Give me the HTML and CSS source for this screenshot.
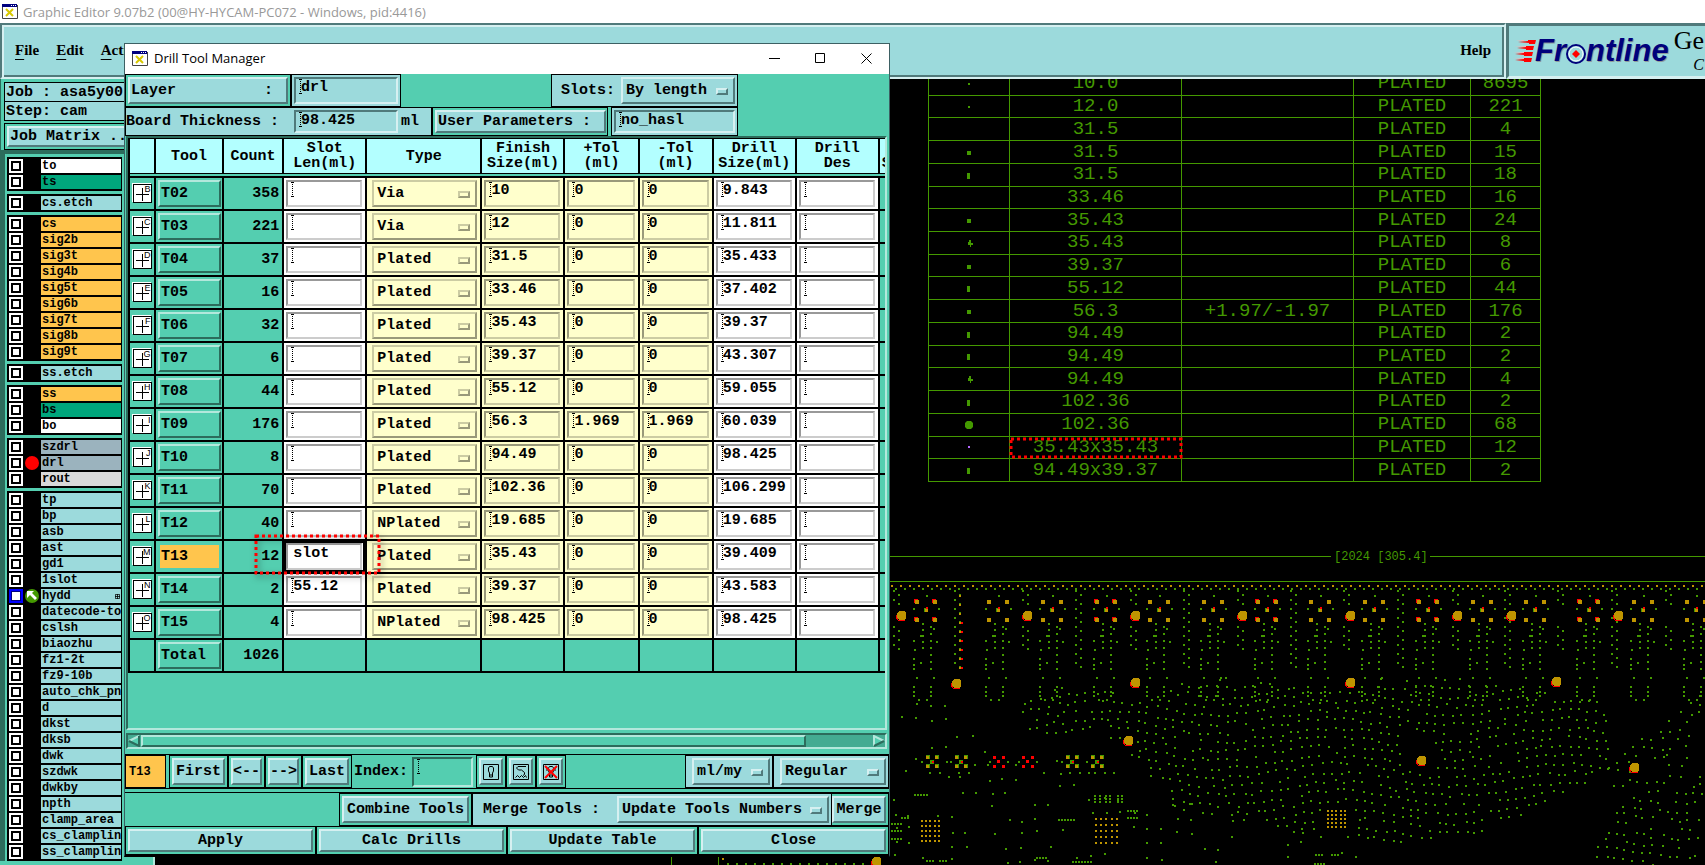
FILE: index.html
```html
<!DOCTYPE html>
<html lang="en">
<head>
<meta charset="utf-8">
<title>Graphic Editor</title>
<link rel="stylesheet" href="styles.css">
</head>
<body>
<header class="titlebar">
  <svg class="xlogo" viewBox="0 0 16 15" aria-hidden="true"><path fill="#fff" d="M0 0h16v15H0z"/><path fill="#000080" d="M0 0h15v3H0z"/><path fill="#fff" d="M9 1h1v1H9zM11 1h1v1h-1zM13 1h1v1h-1z"/><path fill="none" stroke="#444" d="M.5 3v11.500h15V1"/><path stroke="#d8c800" stroke-width="2" d="M4 5l7 7M11 5l-7 7"/></svg>
  <span class="titlebar-text">Graphic Editor 9.07b2 (00@HY-HYCAM-PC072 - Windows, pid:4416)</span>
</header>
<div class="menurow">
  <nav class="menubar">
    <a href="#file"><u>F</u>ile</a><a href="#edit"><u>E</u>dit</a><a href="#actions"><u>A</u>ctions</a><a class="menu-help" href="#help">Help</a>
  </nav>
  <div class="brand">
    <svg class="darts" viewBox="0 0 24 24" aria-hidden="true"><g fill="#ffb0b0"><path d="M3 2h8v-1zM1 8h12v-1zM0 14h12v-1zM0 20h12v-1z"/></g><g fill="#f00"><path d="M5 3l10-1v-1h8l-1 4h-6v-1zM4 9l9-1v-1h8l-1 4h-7v-1zM2 15l9-1v-1h9l-1 4h-8v-1zM2 21l9-1v-1h8l-1 4h-7v-1z"/></g></svg>
    <span class="wordmark">Fr<svg class="target" viewBox="0 0 20 20" role="img" aria-label="o"><circle cx="10" cy="10" r="9" fill="#9cdadc" stroke="#00007c" stroke-width="2"/><circle cx="10" cy="10" r="7" fill="none" stroke="#fff"/><path fill="#f00" d="M10 6l4 4-4 4-4-4z"/></svg>ntline</span>
    <span class="product">Ge<i>C</i></span>
  </div>
</div>
<main class="workspace">
  <aside class="side">
    <div class="jobinfo">
      <div class="jobline">Job : asa5y00</div>
      <div class="jobline">Step: cam</div>
      <div class="jobbtn"><button class="btn">Job Matrix ...</button></div>
    </div>
    <div class="layers" id="layers"></div>
  </aside>
  <section class="canvas">
    <svg class="scene" id="scene" aria-hidden="true"></svg>
    <table class="legend"><colgroup><col class="l1"><col class="l2"><col class="l2"><col class="l3"><col class="l4"></colgroup><tbody id="legend"></tbody></table>
  </section>
</main>

<section class="dialog" aria-label="Drill Tool Manager">
  <header class="dlg-title">
    <svg class="xlogo" viewBox="0 0 16 15" aria-hidden="true"><path fill="#fff" d="M0 0h16v15H0z"/><path fill="#000080" d="M0 0h15v3H0z"/><path fill="#fff" d="M9 1h1v1H9zM11 1h1v1h-1zM13 1h1v1h-1z"/><path fill="none" stroke="#444" d="M.5 3v11.500h15V1"/><path stroke="#d8c800" stroke-width="2" d="M4 5l7 7M11 5l-7 7"/></svg>
    <span class="dlg-name">Drill Tool Manager</span>
    <button class="wbtn" aria-label="Minimize"><svg viewBox="0 0 11 11"><path d="M0 5.500h11"/></svg></button>
    <button class="wbtn" aria-label="Maximize"><svg viewBox="0 0 11 11"><path d="M.5.5h9v9h-9z"/></svg></button>
    <button class="wbtn" aria-label="Close window"><svg viewBox="0 0 11 11"><path d="M.5.5l10 10M10.500.5l-10 10"/></svg></button>
  </header>
  <div class="params">
    <div class="prow prow-a">
      <div class="frame w-layer"><button class="btn btn-left"><span>Layer</span><span>:</span></button></div>
      <div class="frame blue w-layerval"><label class="field"><input aria-label="Layer" value="drl"></label></div>
      <div class="spacer"></div>
      <div class="frame blue slots"><label for="slots">Slots:</label><span class="opt"><select id="slots"><option>By length</option></select></span></div>
    </div>
    <div class="prow prow-b">
      <div class="frame blue w-board"><label for="board">Board Thickness :</label><span class="field"><input id="board" value="98.425"></span><span>ml</span></div>
      <div class="frame w-user"><button class="btn btn-left">User Parameters :</button></div>
      <div class="spacer"></div>
      <div class="frame blue w-userval"><label class="field"><input aria-label="User Parameters" value="no_hasl"></label></div>
    </div>
  </div>
  <div class="tableview">
    <table class="tools">
      <colgroup><col class="c-sym"><col class="c-tool"><col class="c-count"><col class="c-size"><col class="c-type"><col class="c-size"><col class="c-tol"><col class="c-tol"><col class="c-size"><col class="c-size"><col class="c-size"></colgroup>
      <thead>
        <tr><th></th><th>Tool</th><th>Count</th><th>Slot<br>Len(ml)</th><th>Type</th><th>Finish<br>Size(ml)</th><th>+Tol<br>(ml)</th><th>-Tol<br>(ml)</th><th>Drill<br>Size(ml)</th><th>Drill<br>Des</th><th class="cut"><br>S</th></tr>
        <tr class="gap"><td colspan="11"></td></tr>
      </thead>
      <tbody id="tools"></tbody>
    </table>
  </div>
  <div class="scroll" aria-hidden="true">
    <svg viewBox="0 0 12 12"><path fill="#54ceb0" d="M1 6l10-5v10z"/><path fill="none" stroke="#b3e8dc" stroke-width="2" d="M11 1L1 6"/><path fill="none" stroke="#2c6c5c" stroke-width="2" d="M1 6l10 5V1"/></svg>
    <div class="track"><div class="thumb"></div></div>
    <svg viewBox="0 0 12 12"><path fill="#54ceb0" d="M11 6L1 1v10z"/><path fill="none" stroke="#b3e8dc" stroke-width="2" d="M1 11V1l10 5"/><path fill="none" stroke="#2c6c5c" stroke-width="2" d="M1 11l10-5"/></svg>
  </div>
  <div class="navrow">
    <div class="current">T13</div>
    <div class="frame"><button class="btn">First</button></div>
    <div class="frame"><button class="btn arrow">&lt;--</button></div>
    <div class="frame"><button class="btn arrow">--&gt;</button></div>
    <div class="frame"><button class="btn">Last</button></div>
    <label class="index" for="index">Index:</label><span class="field green"><input id="index"></span>
    <div class="frame"><button class="btn ico" aria-label="Highlight"><svg viewBox="0 0 16 16"><path d="M.5.5h15v15H.5z"/><path d="M6.500 11V9L5.500 7V4l1-1.500h3l1 1.500v3l-1 2v2zM6.500 11v2h3v-2"/></svg></button></div>
    <div class="frame"><button class="btn ico" aria-label="Select"><svg viewBox="0 0 16 16"><path d="M.5.5h15v15H.5z"/><path d="M13 2.500H5L3.500 4l2 2h3l3 2.500v2L10 11.500M2.500 13.500l2-2 2 2 2-2 2 2 2-2 1 2"/></svg></button></div>
    <div class="frame"><button class="btn ico" aria-label="Clear highlight"><svg viewBox="0 0 16 16"><path d="M.5.5h15v15H.5z"/><path d="M6.500 11V9L5.500 7V4l1-1.500h3l1 1.500v3l-1 2v2zM6.500 11v2h3v-2M4 4v3M12 4v3"/><path stroke="#f00" stroke-width="2" d="M2 2l12 12M14 2L2 14"/></svg></button></div>
    <div class="spacer"></div>
    <div class="frame blue unit"><span class="opt"><select aria-label="Units"><option>ml/my</option></select></span></div>
    <div class="frame blue mode"><span class="opt"><select aria-label="Mode"><option>Regular</option></select></span></div>
  </div>
  <div class="mergerow">
    <div class="spacer"></div>
    <div class="frame"><button class="btn">Combine Tools</button></div>
    <div class="frame blue merge"><label for="merge">Merge Tools :</label><span class="opt"><select id="merge"><option>Update Tools Numbers</option></select></span></div>
    <div class="frame bare"><button class="btn">Merge</button></div>
  </div>
  <div class="actions">
    <div class="frame"><button class="btn">Apply</button></div><div class="frame"><button class="btn">Calc Drills</button></div><div class="frame"><button class="btn">Update Table</button></div><div class="frame"><button class="btn">Close</button></div>
  </div>
</section>
<script src="app.js"></script>
</body>
</html>
```

FILE: styles.css
```css
:root {
  --teal: #54ceb0;
  --teal-hi: #b3e8dc;
  --teal-lo: #2c6c5c;
  --blue: #9cdadc;
  --blue-hi: #d6f0f1;
  --blue-lo: #507a7b;
  --yellow: #ffffcc;
  --orange: #ffc54d;
  --trace: #449900;
  --mono: "Liberation Mono", monospace;
}
*, *::before, *::after { box-sizing: border-box; }
body {
  margin: 0;
  height: 100vh;
  overflow: hidden;
  display: flex;
  flex-direction: column;
  background: #000;
  color: #000;
  font: bold 15px/15px var(--mono);
}
button, input, select { font: inherit; color: inherit; }
.spacer { flex: 1; }
.xlogo { width: 16px; height: 15px; flex: none; }

.titlebar {
  display: flex;
  align-items: center;
  gap: 5px;
  height: 23px;
  padding-left: 2px;
  background: #fff;
  color: #999;
  font: 13px/20px "Open Sans", sans-serif;
}
.menurow { display: flex; height: 56px; background: var(--teal); }
.menubar {
  flex: 1;
  display: flex;
  align-items: center;
  gap: 17px;
  padding: 0 13px 2px 13px;
  background: var(--blue);
  border: 2px solid var(--blue-lo);
  border-color: var(--blue-lo) var(--blue-hi) var(--blue-hi) var(--blue-lo);
  box-shadow: inset 2px 2px var(--blue-hi), inset -2px -2px var(--blue-lo);
  font: bold 15px/20px "Liberation Serif", serif;
}
.menubar a { color: #000; text-decoration: none; }
.menubar u { text-underline-offset: 4px; }
.menu-help { margin-left: auto; }
.brand {
  width: 199px;
  display: flex;
  align-items: center;
  overflow: hidden;
  padding-left: 4px;
  background: var(--blue);
  border-left: 3px solid var(--blue-lo);
  border-top: 3px solid var(--blue-lo);
  border-bottom: 3px solid var(--blue-hi);
}
.darts { width: 24px; height: 24px; flex: none; }
.wordmark {
  display: flex;
  align-items: center;
  flex: none;
  margin-left: -2px;
  color: #00007c;
  font: italic bold 31px/40px "Liberation Sans", Arial, sans-serif;
  text-shadow: 1px 1px #8f9a9a;
}
.target { width: 20px; height: 20px; margin-top: 6px; }
.product {
  display: flex;
  flex-direction: column;
  margin-left: 5px;
  font: 26px/28px "Liberation Serif", serif;
}
.product i { font-size: 16px; line-height: 20px; align-self: flex-end; }

.workspace { flex: 1; display: flex; min-height: 0; }
.side {
  width: 155px;
  flex: none;
  overflow: hidden;
  background: var(--teal);
  border-right: 2px solid var(--teal-hi);
}
.jobinfo { padding: 3px 0 0 3px; border-left: 1px solid var(--teal-lo); }
.jobline {
  height: 20px;
  padding: 2px 1px;
  border: 1px solid #000;
  background: var(--blue);
  white-space: nowrap;
}
.jobline + .jobline { border-top: 0; height: 19px; }
.jobbtn { margin-top: 2px; padding: 2px; height: 27px; border: 1px solid #000; display: flex; }
.jobbtn .btn { flex: 1; text-align: left; padding: 0 1px; }
.layers {
  padding: 3px 31px 0 2px;
  border-left: 5px solid var(--teal-lo);
  border-top: 4px solid var(--teal-lo);
}
.group { background: #000; padding: 2px 1px 0 2px; margin-bottom: 3px; }
.lrow { display: flex; align-items: center; height: 16px; padding-bottom: 2px; }
.lrow input {
  appearance: none;
  flex: none;
  width: 14px;
  height: 14px;
  margin: 0;
  background: #fff;
  border: 2px solid #fff;
  box-shadow: inset 0 0 0 2px #000;
}
.lrow input:checked { border-color: #00f; box-shadow: inset 0 0 0 1px #000080; }
.mark { width: 18px; flex: none; display: flex; justify-content: center; }
.mark svg { width: 14px; height: 14px; }
.lname {
  flex: 1;
  height: 14px;
  padding-left: 1px;
  background: var(--blue);
  overflow: hidden;
  white-space: nowrap;
  font-size: 12px;
  line-height: 14px;
  position: relative;
}
.lname.white { background: #fff; }
.lname.green { background: #00a67c; }
.lname.orange { background: var(--orange); }
.lname.slate { background: #9bb3be; }
.lname.grey { background: #d9d9d9; }
.lname svg { position: absolute; right: 1px; top: 5px; width: 5px; height: 5px; }

.canvas { flex: 1; position: relative; overflow: hidden; background: #000; }
.scene { position: absolute; inset: 0; width: 100%; height: 100%; }
.legend {
  position: absolute;
  left: 773px;
  top: -7px;
  width: 612px;
  height: 410px;
  table-layout: fixed;
  border-collapse: collapse;
  color: var(--trace);
  font-weight: normal;
  font-size: 19px;
  text-align: center;
}
.legend td { border: 1px solid var(--trace); padding: 0; position: relative; }
.legend svg { display: block; margin: 0 auto; width: 8px; height: 8px; }
.l1 { width: 81px; } .l2 { width: 172px; } .l3 { width: 117px; } .l4 { width: 70px; }
.note { position: absolute; overflow: visible; filter: drop-shadow(2px 3px 3px #0008); z-index: 2; }
.note rect { fill: none; stroke: #f00; stroke-width: 3; stroke-dasharray: 3 3; width: 100%; height: 100%; }
.legend .note { left: 1px; top: 2px; width: 170px; height: 18px; margin: 0; }
.tools .note { left: -28px; top: -5px; width: 123px; height: 37px; }

.dialog {
  position: absolute;
  left: 124px;
  top: 43px;
  width: 766px;
  background: var(--teal);
  border: 1px solid #3d6063;
  border-bottom: 2px solid #000;
}
.dlg-title {
  display: flex;
  align-items: center;
  height: 30px;
  padding: 0 17px 2px 7px;
  background: #fff;
  font: 13px/20px "Open Sans", sans-serif;
}
.dlg-name { flex: 1; padding-left: 6px; }
.wbtn { width: 11px; height: 11px; margin-left: 35px; padding: 0; border: 0; background: none; display: flex; }
.wbtn svg { width: 11px; height: 11px; fill: none; stroke: #000; }

.frame { display: flex; border: 1px solid #000; padding: 2px; background: var(--teal); white-space: nowrap; }
.frame.blue { background: var(--blue); align-items: center; }
.btn, .opt select {
  background: var(--blue);
  border: 2px solid;
  border-color: var(--blue-hi) var(--blue-lo) var(--blue-lo) var(--blue-hi);
  border-radius: 0;
  padding: 0 2px;
}
.btn { flex: 1; white-space: nowrap; }
.btn.arrow { padding: 0; }
.btn-left { display: flex; align-items: center; justify-content: space-between; padding: 0 13px 0 1px; }
.opt { position: relative; display: flex; align-self: stretch; flex: 1; }
.opt select { appearance: none; flex: 1; width: 100%; padding: 0 20px 0 3px; margin: 0; outline: 0; }
.opt::after {
  content: "";
  position: absolute;
  right: 7px;
  top: calc(50% - 3px);
  width: 12px;
  height: 7px;
  border: 2px solid;
  border-color: var(--blue-hi) var(--blue-lo) var(--blue-lo) var(--blue-hi);
  pointer-events: none;
}
.field {
  display: flex;
  align-self: stretch;
  flex: 1;
  min-width: 0;
  padding-left: 3px;
  border: 2px solid;
  border-color: var(--blue-lo) var(--blue-hi) var(--blue-hi) var(--blue-lo);
}
.field::before {
  content: "";
  flex: none;
  width: 3px;
  height: 15px;
  margin-right: -1px;
  background:
    repeating-linear-gradient(#000 0 1px, transparent 1px 2px) 1px 0 / 1px 15px no-repeat,
    linear-gradient(#000, #000) 0 0 / 3px 1px no-repeat,
    linear-gradient(#000, #000) 0 14px / 3px 1px no-repeat;
}
.field input { width: 100%; min-width: 0; height: 16px; padding: 0; border: 0; outline: 0; background: none; }

.prow { display: flex; margin-right: 151px; }
.prow-a { height: 33px; }
.prow-b { height: 29px; }
.prow-b .spacer { max-width: 3px; }
.w-layer { width: 166px; }
.w-layerval { width: 110px; }
.slots { width: 187px; gap: 6px; padding-left: 9px; }
.w-board { width: 307px; gap: 3px; padding-right: 12px; padding-left: 0; }
.w-board .field { margin-left: 12px; }
.w-user { width: 176px; }
.w-userval { flex: 1; }

.tableview {
  height: 594px;
  margin: 0 2px 0 1px;
  overflow: hidden;
  border: 2px solid;
  border-color: var(--teal-lo) var(--teal-hi) var(--teal-hi) var(--teal-lo);
}
.tools { table-layout: fixed; width: 835px; border-collapse: separate; border-spacing: 0; border-left: 2px solid #000; }
.c-sym { width: 26px; } .c-tool { width: 68px; } .c-count { width: 60px; }
.c-size { width: 83px; } .c-type { width: 115px; } .c-tol { width: 74px; }
.tools th { height: 36px; padding: 0; background: #b3ffff; border: solid #000; border-width: 1px 2px 1px 0; }
.tools .cut { text-align: left; padding-left: 2px; }
.tools .gap td { height: 4px; padding: 0; border-bottom: 2px solid #000; background: var(--teal); }
.tools tbody td { height: 33px; padding: 2px; border: solid #000; border-width: 0 2px 2px 0; position: relative; }
.tools .count { text-align: right; padding-right: 3px; }
.tools .white { background: #fff; }
.tools .yellow { background: var(--yellow); }
.tools .btn { display: block; width: 63px; height: 27px; text-align: left; padding: 0 1px; background: var(--teal); border-color: var(--teal-hi) var(--teal-lo) var(--teal-lo) var(--teal-hi); }
.tools .btn.on { background: var(--orange); border-color: var(--teal); }
.tools .field { height: 27px; margin-right: 1px; border-color: #999 #ccc #ccc #999; }
.tools .yellow .field { border-color: #99997a #cccca3 #cccca3 #99997a; }
.tools .opt { height: 27px; margin: 0 1px 0 3px; }
.tools .opt select { background: var(--yellow); }
.tools .opt select, .tools .opt::after { border-color: #cccca3 #99997a #99997a #cccca3; }
.tools .picked { box-shadow: inset 0 0 0 2px #000; }
.tools .picked .field::before { visibility: hidden; }
.sym { display: block; width: 19px; height: 19px; margin: 0 auto; position: relative; background: #fff; border: 1px solid #000; box-shadow: -1px -1px #fff; font-size: 9px; line-height: 8px; text-align: right; font-family: "Liberation Sans", sans-serif; font-weight: normal; }
.sym::before { content: ""; position: absolute; left: 2px; top: 3px; width: 13px; height: 13px; background: linear-gradient(#000, #000) 50% 0 / 1px 100% no-repeat, linear-gradient(#000, #000) 0 50% / 100% 1px no-repeat; }

.scroll { display: flex; margin: 3px 2px 0 1px; height: 16px; background: #44ab92; border: 2px solid; border-color: var(--teal-lo) var(--teal-hi) var(--teal-hi) var(--teal-lo); }
.scroll svg { width: 12px; height: 12px; flex: none; }
.track { flex: 1; margin: 0 1px; }
.thumb { width: 91%; height: 12px; background: var(--teal); border: 2px solid; border-color: var(--teal-hi) var(--teal-lo) var(--teal-lo) var(--teal-hi); }

.navrow { display: flex; margin-top: 5px; height: 35px; border: solid #000; border-width: 1px 0; }
.current { width: 41px; margin-right: 3px; padding: 9px 3px; background: var(--orange); border: 1px solid #000; font-size: 12px; }
.index { padding: 9px 4px 0 2px; }
.field.green { flex: none; width: 61px; margin: 2px 3px 1px 0; border-color: var(--teal-lo) var(--teal-hi) var(--teal-hi) var(--teal-lo); }
.ico { padding: 0; width: 24px; display: flex; align-items: center; justify-content: center; }
.ico svg { width: 16px; height: 16px; fill: none; stroke: #000; }
.unit { width: 88px; padding-left: 6px; }
.mode { width: 116px; padding-left: 6px; }

.mergerow { display: flex; margin-top: 3px; height: 34px; border-top: 1px solid #000; }
.mergerow .btn { padding: 0 3px; }
.merge { width: 360px; padding-left: 10px; gap: 17px; }
.mergerow .bare { border-left: 0; padding-left: 0; }
.mergerow .bare .btn { padding: 0 1px; min-width: 54px; }
.actions { display: grid; grid-template-columns: repeat(4, 1fr); height: 29px; }
```

FILE: app.js
```js
const el = id => document.getElementById(id);

/* Layer list */
const layerGroups = [
  ['white:to', 'green:ts'],
  [':cs.etch'],
  ['orange:cs', 'orange:sig2b', 'orange:sig3t', 'orange:sig4b', 'orange:sig5t', 'orange:sig6b', 'orange:sig7t', 'orange:sig8b', 'orange:sig9t'],
  [':ss.etch'],
  ['orange:ss', 'green:bs', 'white:bo'],
  ['slate:szdrl', 'slate:drl', 'grey:rout'],
  [':tp', ':bp', ':asb', ':ast', ':gd1', ':1slot', ':hydd', ':datecode-to', ':cslsh', ':biaozhu', ':fz1-2t', ':fz9-10b', ':auto_chk_pnl', ':d', ':dkst', ':dksb', ':dwk', ':szdwk', ':dwkby', ':npth', ':clamp_area', ':cs_clampline', ':ss_clampline']
];
const marks = {
  drl: '<svg viewBox="0 0 14 14"><circle cx="7" cy="7" r="7" fill="#f00"/></svg>',
  hydd: '<svg viewBox="0 0 14 14"><circle cx="7" cy="7" r="7" fill="#449900"/><path fill="#fff" d="M2 2h7L7 4l5 5-2 2-5-5-3 3z"/></svg>'
};
el('layers').innerHTML = layerGroups.map(g => '<div class="group">' + g.map(s => {
  const [c, n] = s.split(':');
  const grid = n === 'hydd' ? '<svg viewBox="0 0 5 5"><path fill="none" stroke="#000" stroke-width=".8" d="M.4.400h4.200v4.200H.4zM2.500 0v5M0 2.500h5"/></svg>' : '';
  return `<div class="lrow"><input type="checkbox" aria-label="${n}"${n === 'hydd' ? ' checked' : ''}><span class="mark">${marks[n] || ''}</span><span class="lname ${c}">${n}${grid}</span></div>`;
}).join('') + '</div>').join('');

/* Drill tools: letter, tool, count, slot, type, finish, +tol, -tol, drill */
const tools = `B T02 358 - Via 10 0 0 9.843
C T03 221 - Via 12 0 0 11.811
D T04 37 - Plated 31.5 0 0 35.433
E T05 16 - Plated 33.46 0 0 37.402
F T06 32 - Plated 35.43 0 0 39.37
G T07 6 - Plated 39.37 0 0 43.307
H T08 44 - Plated 55.12 0 0 59.055
I T09 176 - Plated 56.3 1.969 1.969 60.039
J T10 8 - Plated 94.49 0 0 98.425
K T11 70 - Plated 102.36 0 0 106.299
L T12 40 - NPlated 19.685 0 0 19.685
M T13 12 slot Plated 35.43 0 0 39.409
N T14 2 55.12 Plated 39.37 0 0 43.583
O T15 4 - NPlated 98.425 0 0 98.425`.split('\n').map(r => r.split(' '));
const note = '<svg class="note"><rect/></svg>';
const field = (cls, name, v, extra = '') =>
  `<td class="${cls}"><label class="field"><input aria-label="${name}" value="${v}"></label>${extra}</td>`;
el('tools').innerHTML = tools.map(([l, t, c, s, ty, f, p, m, d]) => {
  const on = t === 'T13';
  return `<tr><td><span class="sym">${l}</span></td><td><button class="btn${on ? ' on' : ''}">${t}</button></td><td class="count">${c}</td>` +
    field('white' + (on ? ' picked' : ''), t + ' slot length', s === '-' ? '' : s, on ? note : '') +
    `<td class="yellow"><span class="opt"><select aria-label="${t} type"><option>${ty}</option></select></span></td>` +
    field('yellow', t + ' finish size', f) + field('yellow', t + ' plus tolerance', p) + field('yellow', t + ' minus tolerance', m) +
    field('white', t + ' drill size', d) + field('white', t + ' drill des', '') + '<td></td></tr>';
}).join('') + '<tr><td></td><td><button class="btn">Total</button></td><td class="count">1026</td>' + '<td></td>'.repeat(8) + '</tr>';

/* Drill legend */
const dot = { s: 'M3 3h2v2H3z', a: 'M2 3h4v4H2z', b: 'M2 2h3v6H2z', c: 'M4 1h2v3h2v2H6v3H5V6H3V3h1z', o: 'M2 0h4l2 2v4L6 8H2L0 6V2z' };
const legend = `s 10.0 - 8695
s 12.0 - 221
- 31.5 - 4
a 31.5 - 15
b 31.5 - 18
- 33.46 - 16
a 35.43 - 24
c 35.43 - 8
a 39.37 - 6
b 55.12 - 44
a 56.3 +1.97/-1.97 176
b 94.49 - 2
b 94.49 - 2
c 94.49 - 4
b 102.36 - 2
o 102.36 - 68
v 35.43x35.43 - 12
b 94.49x39.37 - 2`.split('\n').map(r => r.split(' '));
el('legend').innerHTML = legend.map(([k, d, t, n]) => {
  const icon = k === '-' ? '' : `<svg viewBox="0 0 8 8"><path fill="${k === 'v' ? '#b366ff' : '#449900'}" d="${dot[k] || dot.s}"/></svg>`;
  return `<tr><td>${icon}</td><td>${d}${k === 'v' ? note : ''}</td><td>${t === '-' ? '' : t}</td><td>PLATED</td><td>${n}</td></tr>`;
}).join('');

/* Board artwork, drawn in window coordinates */
let seed = 7;
const rnd = () => (seed = (seed * 16807) % 2147483647) / 2147483647;
const paths = { g: '', y: '', r: '' };
const px = (k, x, y, s = 2) => { x = Math.round(x); y = Math.round(y); paths[k] += `M${x} ${y}h${s}v${s}h-${s}z`; };
const discAt = (x, y) => { paths.r += `M${x - 5} ${y - 1}h2v5h7v1h-7l-2-2z`; paths.y += `M${x - 2} ${y - 5}h5l2 2v5l-2 2h-5l-2-2v-5z`; };

for (let x = 891; x < 1705; x += 9) { px('y', x, 585); px('g', x + 4, 588); }

for (const [i, c] of [926, 998, 1052, 1106, 1159, 1213, 1267, 1320, 1374, 1428, 1482, 1535, 1589, 1643, 1696].entries()) {
  for (const dx of [-9, 9]) for (const dy of [-9, 9]) {
    if (i % 3 === 0) px('r', c + dx - 3, 610 + dy - 2, 4);
    px('y', c + dx - 2, 610 + dy - 1, 4);
  }
  px('g', c - 2, 608, 4); px('y', c - 1, 609, 3); px('r', c, 607);
  px('g', c - 13, 608); px('g', c + 12, 608); px('g', c, 595);
  for (let y = 623; y < 652; y += 6) px('g', c - 4, y);
  for (let y = 626; y < 670; y += 7) px('g', c + 4, y);
  for (const y of [686, 691, 695]) { px('g', c + 4, y); px('g', c - 13, y); }
  for (const y of [640, 649, 658, 664, 668]) px('g', c - 13 + (y % 2), y);
  px('g', c - 10, 677); px('g', c + 7, 677); px('g', c + 7, 628); px('g', c - 6, 635); px('g', c - 6, 662); px('g', c + 10, 641); px('g', c - 8, 699); px('g', c, 699);
}
for (const [i, x] of [893, 954, 1022, 1075, 1130, 1183, 1237, 1290, 1343, 1397, 1452, 1504, 1557, 1611, 1665].entries()) {
  for (let y = 590; y < (i % 2 ? 668 : 650); y += 9) {
    if (y > 605 && y < 622 && i % 2 === 0) continue;
    px('g', x, y); px('g', x + 5, y + 4);
  }
}
for (let y = 595; y < 668; y += 9) { px('y', 959, y); if (y > 620) px('r', 961, y); }

const inside = (x, y, p) => {
  let hit = false;
  for (let i = 0, j = p.length - 1; i < p.length; j = i++)
    if ((p[i][1] > y) !== (p[j][1] > y) && x < (p[j][0] - p[i][0]) * (y - p[i][1]) / (p[j][1] - p[i][1]) + p[i][0]) hit = !hit;
  return hit;
};
const fill = (poly, step, bend, keep = 1, hole = []) => {
  for (let x = 889; x < 1705; x += step) for (let y = 660; y < 865; y += step) {
    const qx = x + Math.sin(y / 31) * bend + rnd() * 4, qy = y + Math.sin(x / 37) * bend + rnd() * 4;
    if (inside(qx, qy, poly) && !hole.some(([hx, hy, r]) => Math.hypot(qx - hx, qy - hy) < r) && rnd() < keep) px('g', qx, qy);
  }
};
fill([[1017, 700], [1065, 684], [1110, 690], [1150, 700], [1172, 682], [1228, 676], [1300, 688], [1340, 682], [1375, 678], [1460, 678], [1510, 684], [1600, 700], [1610, 735], [1612, 768], [1560, 795], [1530, 812], [1480, 833], [1420, 841], [1350, 841], [1295, 835], [1240, 815], [1180, 812], [1150, 780], [1125, 748], [1100, 734], [1020, 734]], 9, 7, .93, [[1421, 755, 18], [1408, 735, 10], [1350, 683, 8], [1336, 820, 18], [1128, 741, 9]]);
fill([[1590, 865], [1600, 830], [1640, 780], [1700, 775], [1705, 865]], 9, 5, .8);
fill([[1600, 770], [1680, 705], [1705, 690], [1705, 712], [1650, 770], [1615, 800]], 9, 5, .8);
fill([[1655, 760], [1705, 720], [1705, 790], [1680, 790]], 10, 4, .6);
fill([[891, 700], [960, 700], [1000, 745], [1130, 770], [1180, 800], [1340, 835], [1380, 865], [891, 865]], 14, 4, .42, [[930, 830, 16], [1106, 830, 18]]);
for (const [x, y, n] of [[891, 823, 4], [891, 830, 4], [891, 838, 4], [914, 794, 5], [901, 817, 3], [1058, 819, 6], [926, 860, 3], [939, 860, 3], [1127, 810, 4], [1127, 817, 4], [1072, 861, 7], [1036, 857, 4], [1315, 854, 3], [1331, 854, 3], [1314, 863, 4]])
  for (let i = 0; i < n; i++) px('g', x + i * 3, y);
for (const x of [1094, 1099, 1105, 1109, 1117, 1121]) for (let y = 795; y < 804; y += 3) px('g', x, y);
for (const [ax, ay, dx, dy] of [[921, 820, 4, 5], [1095, 818, 5, 6], [1327, 810, 4, 4]])
  for (let i = 0; i < 5; i++) for (let j = 0; j < 5; j++) px('y', ax + i * dx + (i > 2 ? 1 : 0), ay + j * dy);
for (const x of [932, 961, 1072, 1097]) {
  for (const dx of [-5, 4]) for (const dy of [-5, 4]) { px('g', x + dx - 1, 761 + dy - 1, 4); px('y', x + dx - 1, 761 + dy, 3); }
  px('g', x - 2, 760, 4); px('r', x, 761); px('g', x - 11, 761); px('g', x - 3, 772); px('g', x + 7, 772);
}
for (const x of [998, 1027]) {
  for (const dx of [-5, 4]) for (const dy of [-5, 4]) px('r', x + dx, 761 + dy, 3);
  px('r', x - 1, 760, 3); px('g', x - 9, 761); px('g', x + 9, 761);
}
for (const [x, y] of [[901, 616], [1027, 616], [1135, 616], [1242, 616], [1350, 616], [1457, 616], [1511, 616], [1618, 616], [956, 684], [1135, 683], [1128, 741], [1350, 683], [1556, 682], [1421, 761], [1634, 768], [876, 862]]) discAt(x, y);
for (let x = 727; x < 865; x += 9) px('g', x, 863);
px('y', 722, 858);

el('scene').innerHTML = `<g transform="translate(-155 -79)" shape-rendering="crispEdges">
<path d="M889 556.500H1331M1430 556.500H4000M889 581.500H4000M671.500 856V1600M718.500 856V1600" stroke="#449900"/>
<path fill="#449900" d="${paths.g}"/><path fill="#f00" d="${paths.r}"/><path fill="#bf9500" d="${paths.y}"/>
<text x="1334" y="560" fill="#449900" font-size="12" font-weight="normal">[2024 [305.4]</text></g>`;
```
